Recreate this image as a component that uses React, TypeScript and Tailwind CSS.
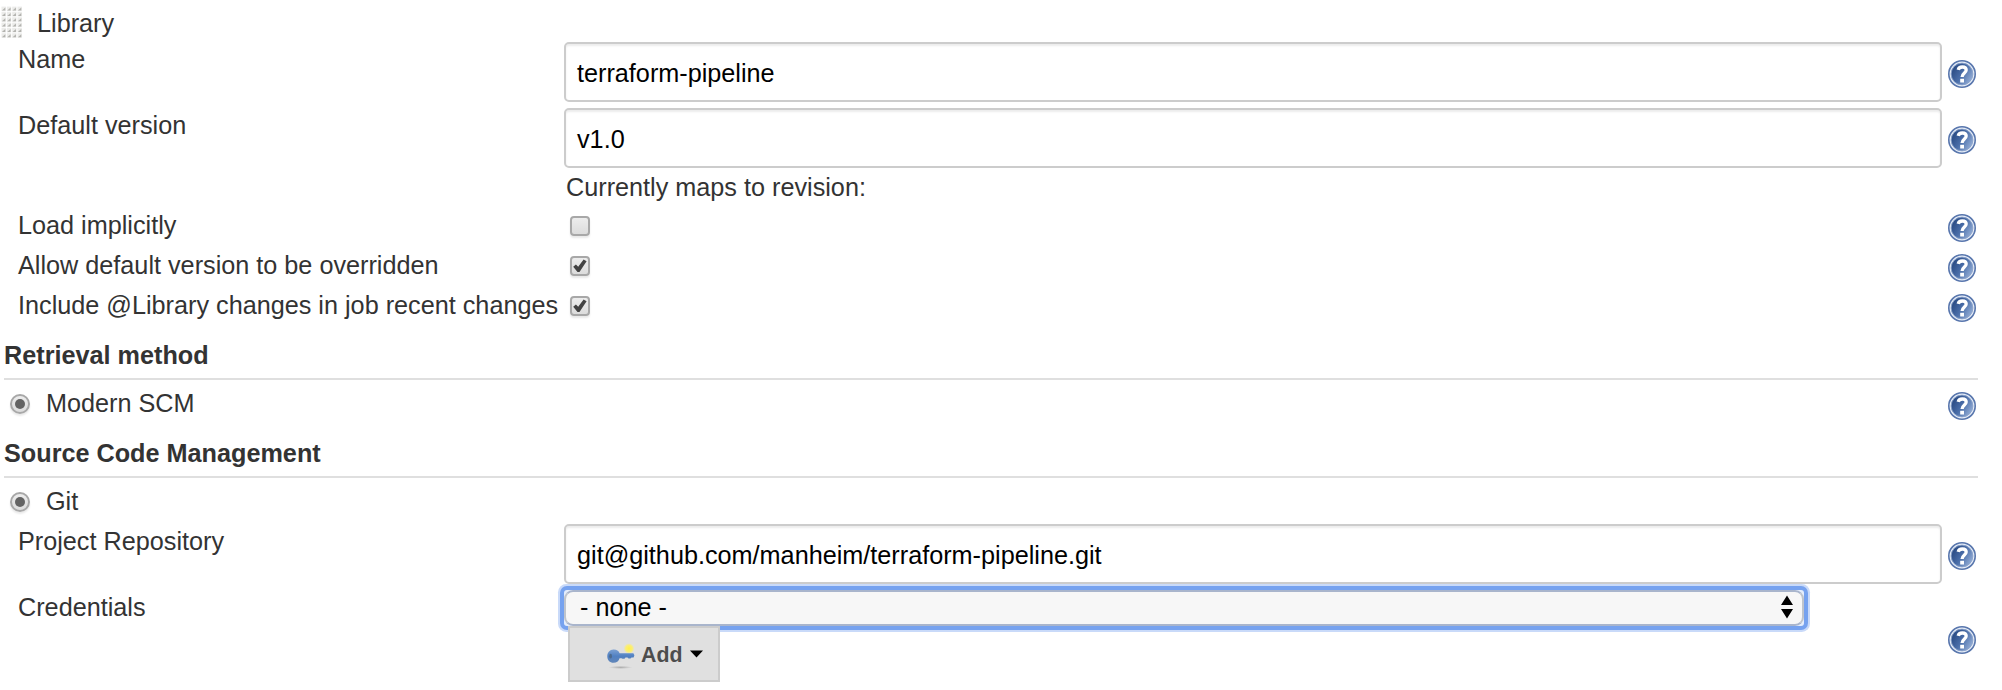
import type { ReactNode } from "react";

function HelpIcon() {
  return (
    <svg width="28" height="28" viewBox="0 0 28 28" className="block shrink-0" role="img" aria-label="Help">
      <defs>
        <linearGradient id="help-fill" x1="0" y1="0.2" x2="1" y2="0.8">
          <stop offset="0.1" stopColor="#2c4d86" />
          <stop offset="0.5" stopColor="#4a6ea9" />
          <stop offset="1" stopColor="#9ab3da" />
        </linearGradient>
      </defs>
      <circle cx="14" cy="14" r="13.2" fill="#e6edf7" stroke="#5876ad" strokeWidth="1.6" />
      <circle cx="14" cy="14" r="10.9" fill="url(#help-fill)" stroke="#8ba3cb" strokeWidth="0.9" />
      <path d="M10.2 9.8C10.7 7.6 12.2 7 14.3 7C16.8 7 18.2 8.2 18.2 10.1C18.2 13 14.1 13 14.1 17" fill="none" stroke="#fff" strokeWidth="3.3" />
      <rect x="12.2" y="18.8" width="3.8" height="3.7" fill="#fff" />
    </svg>
  );
}

function Grip() {
  const cells = Array.from({ length: 24 }, (_, i) => [(i % 4) * 5.33, Math.floor(i / 4) * 5.33]);
  return (
    <svg width="22" height="34" viewBox="0 0 22 34" className="block shrink-0" aria-hidden="true">
      {cells.map(([x, y], i) => (
        <g key={i}>
          <rect x={x + 0.5} y={y + 0.6} width="4.4" height="4.6" fill="#ececea" />
          <path d={`M${x + 4.3} ${y + 1.6}V${y + 4.6}H${x + 0.9}Z`} fill="#b3b3af" />
        </g>
      ))}
    </svg>
  );
}

function Checkbox({ checked = false }: { checked?: boolean }) {
  return (
    <span
      role="checkbox"
      aria-checked={checked}
      className="block h-5 w-5 rounded-[4px] border-2 border-[#a8a8a8] bg-linear-to-b from-[#ededed] to-[#dcdcdc] shadow-[0_2px_2px_rgba(0,0,0,0.09)]"
    >
      {checked && (
        <svg width="16" height="16" viewBox="0 0 16 16" className="block" aria-hidden="true">
          <path d="M1.2 8.8L3.9 6.4L6.2 8.7L11.6 1.4L14.6 3.3L7.5 13.9H5.5Z" fill="#424242" />
        </svg>
      )}
    </span>
  );
}

function Radio() {
  return (
    <span
      role="radio"
      aria-checked="true"
      className="flex h-5 w-5 shrink-0 items-center justify-center rounded-full border-2 border-[#a8a8a8] bg-linear-to-b from-[#ededed] to-[#dcdcdc] shadow-[0_2px_2px_rgba(0,0,0,0.09)]"
    >
      <span className="h-2.5 w-2.5 rounded-full bg-[#636363]" />
    </span>
  );
}

function TextField({ value }: { value: string }) {
  return (
    <div className="flex h-[60px] flex-1 items-center rounded-[5px] border-2 border-[#cccccc] bg-white pt-px pl-[11px] text-black shadow-[inset_0_2px_2px_rgba(0,0,0,0.075)]">
      {value}
    </div>
  );
}

function FieldRow({ label, value }: { label: string; value: string }) {
  return (
    <div className="flex h-[66px] items-start">
      <div className="w-[546px] pt-0.5">{label}</div>
      <TextField value={value} />
      <div className="ml-1.5 pt-[18px]">
        <HelpIcon />
      </div>
    </div>
  );
}

function CheckRow({ label, checked }: { label: string; checked?: boolean }) {
  return (
    <div className="flex h-10 items-start">
      <div className="w-[552px] pt-1 whitespace-nowrap">{label}</div>
      <div className="flex-1 pt-2.5">
        <Checkbox checked={checked} />
      </div>
      <div className="pt-2">
        <HelpIcon />
      </div>
    </div>
  );
}

function Section({ children }: { children: ReactNode }) {
  return (
    <h2 className="mr-[24px] ml-1 flex h-[54px] items-start border-b-2 border-[#dfdfdf] pt-3.5 font-bold">
      {children}
    </h2>
  );
}

function KeyIcon() {
  return (
    <svg width="30" height="28" viewBox="0 0 30 28" className="block shrink-0" aria-hidden="true">
      <defs>
        <radialGradient id="key-glow">
          <stop offset="0" stopColor="#fff04a" />
          <stop offset="0.6" stopColor="#fbee75" />
          <stop offset="1" stopColor="#fbee75" stopOpacity="0" />
        </radialGradient>
        <radialGradient id="key-shadow">
          <stop offset="0" stopColor="#adadad" />
          <stop offset="1" stopColor="#adadad" stopOpacity="0" />
        </radialGradient>
        <linearGradient id="key-body" x1="0" y1="0" x2="0" y2="1">
          <stop offset="0" stopColor="#7ba0d2" />
          <stop offset="0.5" stopColor="#5080c2" />
          <stop offset="1" stopColor="#6286b8" />
        </linearGradient>
      </defs>
      <ellipse cx="14.5" cy="26.4" rx="12" ry="1.6" fill="url(#key-shadow)" />
      <circle cx="23" cy="7.6" r="5.4" fill="url(#key-glow)" />
      <path d="M7.4 8.6C10.4 8.4 12.6 9.8 13.6 12.2H27.4L28.4 14.2L27.6 16.4H25.5L24.5 17.6H22.5L21.5 16.6H19.5L18.5 17.8H16.5L15.5 17.2H13.6C12.8 20.2 10.4 21.8 7.6 21.8C3.7 21.8 1.3 19.2 1.3 15.3C1.3 11.5 3.9 8.8 7.4 8.6Z" fill="url(#key-body)" />
      <ellipse cx="4.6" cy="15.2" rx="1.4" ry="2.4" fill="#4d6a8c" />
    </svg>
  );
}

export default function App() {
  return (
    <main className="h-[690px] w-[2002px] overflow-hidden bg-white font-['Liberation_Sans',Arial,sans-serif] text-[25.22px] leading-[30px] text-[#333333]">
      <div className="flex h-[42px] items-start pl-px">
        <div className="pt-1.5">
          <Grip />
        </div>
        <div className="pt-2 pl-3.5">Library</div>
      </div>

      <div className="mr-[26px] ml-[18px]">
        <FieldRow label="Name" value="terraform-pipeline" />
        <FieldRow label="Default version" value="v1.0" />
        <div className="h-8 pl-[548px] leading-[26px]">Currently maps to revision:</div>
        <CheckRow label="Load implicitly" />
        <CheckRow label="Allow default version to be overridden" checked />
        <CheckRow label="Include @Library changes in job recent changes" checked />
      </div>

      <Section>Retrieval method</Section>
      <div className="mr-[26px] ml-2.5 flex h-11 items-start">
        <div className="pt-3.5">
          <Radio />
        </div>
        <div className="flex-1 pt-2 pl-4">Modern SCM</div>
        <div className="pt-3">
          <HelpIcon />
        </div>
      </div>

      <Section>Source Code Management</Section>
      <div className="mr-[26px] ml-2.5 flex h-[46px] items-start">
        <div className="pt-3.5">
          <Radio />
        </div>
        <div className="flex-1 pt-2 pl-4">Git</div>
      </div>

      <div className="mr-[26px] ml-[18px]">
        <FieldRow label="Project Repository" value="git@github.com/manheim/terraform-pipeline.git" />
        <div className="flex items-start">
          <div className="w-[546px] pt-0.5">Credentials</div>
          <div className="flex flex-1 flex-col items-start">
            <div className="flex h-9 w-[1240px] rounded-[3px] bg-[#e4edfc] shadow-[0_0_0_4px_#76a2ef,0_0_0_6px_#c9daf9]">
              <div className="flex h-9 w-full items-center justify-between rounded-[9px] border-2 border-t-[#a9b5cc] border-r-[#bfc4cc] border-b-[#a9b5cc] border-l-[#bfc4cc] bg-[#f7f7f7] pr-[9px] pb-0.5 pl-3.5 text-black">
                <span>- none -</span>
                <svg width="12" height="24" viewBox="0 0 12 24" className="block" aria-hidden="true">
                  <path d="M0 10L6 0.5L12 10ZM0 14H12L6 23.5Z" fill="#000" />
                </svg>
              </div>
            </div>
            <div className="relative ml-1 flex h-14 w-[152px] items-center border-2 border-[#cccccc] bg-[#e0e0e0] pt-0.5 pl-9 text-[21.3px] font-bold text-[#4d4d4d]">
              <KeyIcon />
              <span className="ml-[5px]">Add</span>
              <svg width="13" height="8" viewBox="0 0 13 8" className="-mt-0.5 ml-2 block" aria-hidden="true">
                <path d="M0 0.5H13L6.5 7.5Z" fill="#000" />
              </svg>
            </div>
          </div>
          <div className="pt-9">
            <HelpIcon />
          </div>
        </div>
      </div>
    </main>
  );
}
